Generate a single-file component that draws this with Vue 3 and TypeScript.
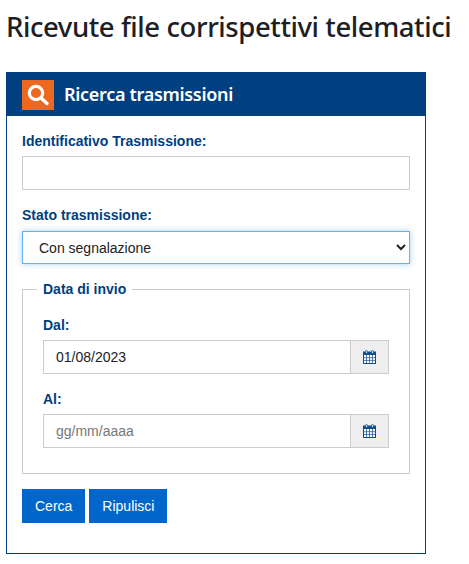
<script setup lang="ts">
const calendarLines: number[] = [0, 1, 2];
const dates = [
  { id: 'dal', label: 'Dal:', value: '01/08/2023' },
  { id: 'al', label: 'Al:', value: '' },
];
</script>

<template>
  <main class="page">
    <h1 class="title">Ricevute file corrispettivi telematici</h1>
    <section class="card">
      <header class="card-head">
        <span class="search-badge">
          <svg width="24" height="24" viewBox="0 0 24 24" fill="none">
            <circle cx="10" cy="10" r="6.7" stroke="#fff" stroke-width="3.2" />
            <path d="M15.5 15.5 L21 20.5" stroke="#fff" stroke-width="3.4" stroke-linecap="round" />
          </svg>
        </span>
        <h2 class="card-title">Ricerca trasmissioni</h2>
      </header>
      <form class="card-body" @submit.prevent>
        <div class="field first">
          <label class="label" for="ident">Identificativo Trasmissione:</label>
          <input id="ident" class="input" type="text" />
        </div>
        <div class="field second">
          <label class="label" for="stato">Stato trasmissione:</label>
          <select id="stato" class="select">
            <option>Con segnalazione</option>
          </select>
        </div>
        <fieldset class="dates">
          <legend class="legend">Data di invio</legend>
          <div v-for="d in dates" :key="d.id" class="date-field">
            <label class="label" :for="d.id">{{ d.label }}</label>
            <div class="date-group">
              <input :id="d.id" class="input date-input" type="text" :value="d.value" placeholder="gg/mm/aaaa" />
              <span class="addon">
                <svg width="13" height="14" viewBox="0 0 13 14">
                  <rect x="0.5" y="2" width="12" height="11.5" fill="#fff" stroke="#0f4c8f" />
                  <rect x="0" y="2" width="13" height="3" fill="#0f4c8f" />
                  <rect x="2.6" y="0.5" width="1.8" height="3" rx="0.9" fill="#eee" stroke="#0f4c8f" stroke-width="0.8" />
                  <rect x="8.6" y="0.5" width="1.8" height="3" rx="0.9" fill="#eee" stroke="#0f4c8f" stroke-width="0.8" />
                  <path v-for="n in calendarLines" :key="'v' + n" :d="`M${3.5 + n * 3} 5V13`" stroke="#0f4c8f" stroke-width="0.7" />
                  <path v-for="n in 2" :key="'h' + n" :d="`M0.5 ${5 + n * 2.7}H12.5`" stroke="#0f4c8f" stroke-width="0.7" />
                </svg>
              </span>
            </div>
          </div>
        </fieldset>
        <div class="actions">
          <button class="btn" type="submit">Cerca</button>
          <button class="btn" type="reset">Ripulisci</button>
        </div>
      </form>
    </section>
  </main>
</template>

<style>
html, body { margin: 0; background: #fff; }
</style>

<style scoped>
.page {
  box-sizing: border-box;
  width: 469px;
  height: 564px;
  padding: 7px 6px 0;
  overflow: hidden;
  font-family: "Liberation Sans", Arial, sans-serif;
}
.title {
  margin: 0 0 25px 0;
  font-family: "Noto Sans", sans-serif;
  font-size: 27.5px;
  line-height: 40px;
  font-weight: 500;
  color: #1c2024;
  white-space: nowrap;
  letter-spacing: -0.42px;
}
.card {
  box-sizing: border-box;
  width: 420px;
  height: 482px;
  border: 1px solid #003f80;
}
.card-head {
  display: flex;
  align-items: center;
  height: 44px;
  margin: -1px -1px 0;
  padding-left: 16px;
  background: #003f80;
}
.search-badge {
  display: flex;
  align-items: center;
  justify-content: center;
  width: 32px;
  height: 30px;
  margin-top: 1px;
  background: #ec6820;
}
.card-title {
  margin: 0 0 0 10px;
  font-family: "Noto Sans", sans-serif;
  font-size: 18px;
  font-weight: 600;
  color: #fff;
  letter-spacing: -0.3px;
}
.card-body {
  padding: 16px 15px 0;
}
.field { display: flex; flex-direction: column; }
.label {
  font-size: 14px;
  line-height: 18px;
  font-weight: 700;
  color: #003f80;
}
.input, .select {
  box-sizing: border-box;
  width: 100%;
  height: 34px;
  font-family: inherit;
  font-size: 14px;
  color: #222;
  background: #fff;
  border: 1px solid #ccc;
  border-radius: 0;
  outline: none;
  padding: 0 12px;
}
.input::placeholder { color: #777; opacity: 1; }
.first .label { margin-bottom: 6px; }
.second { margin-top: 16px; }
.second .label { margin-bottom: 7px; }
.select {
  height: 33px;
  padding: 0 12px;
  border-color: #66afe9;
  box-shadow: 0 0 6px rgba(102, 175, 233, 0.6);
}
.dates {
  box-sizing: border-box;
  height: 193px;
  margin: 17px 0 0;
  padding: 19px 20px 0;
  border: 1px solid #ccc;
  min-width: 0;
}
.legend {
  padding: 0 6px;
  margin-left: -6px;
  font-size: 14px;
  font-weight: 700;
  line-height: 16px;
  color: #003f80;
}
.date-field { display: flex; flex-direction: column; }
.date-field + .date-field { margin-top: 16px; }
.date-field .label { margin-bottom: 6px; }
.date-group { display: flex; height: 34px; }
.date-input { flex: 1; width: auto; min-width: 0; }
.addon {
  box-sizing: border-box;
  display: flex;
  align-items: center;
  justify-content: center;
  width: 38px;
  background: #eee;
  border: 1px solid #ccc;
  border-left: 0;
}
.actions {
  display: flex;
  gap: 4px;
  margin-top: 15px;
}
.btn {
  height: 34px;
  padding: 0 13px;
  border: 0;
  border-radius: 0;
  background: #0066cc;
  color: #fff;
  font-family: inherit;
  font-size: 14px;
}
</style>
